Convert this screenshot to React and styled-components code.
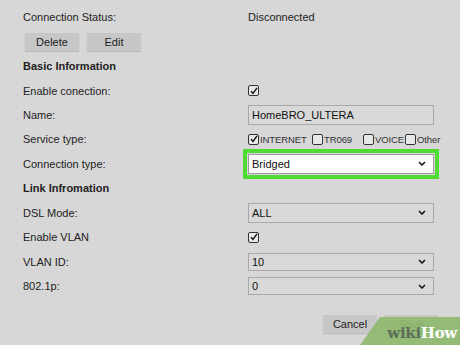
import styled, { createGlobalStyle } from 'styled-components'

const Global = createGlobalStyle`
  html, body {
    margin: 0;
    padding: 0;
    background: #d7d7d7;
    width: 460px;
    height: 345px;
    overflow: hidden;
  }
  body {
    font-family: "Liberation Sans", Arial, sans-serif;
    color: #222;
  }
`

const Page = styled.div`
  position: relative;
  width: 460px;
  height: 345px;
  padding: 5px 0 0 23px;
  box-sizing: border-box;
`

const Form = styled.div`
  display: grid;
  grid-template-columns: 225px 186px;
  grid-auto-rows: 24.45px;
  align-items: center;
  font-size: 11px;
`

const Label = styled.div`
  font-weight: ${p => (p.$bold ? 700 : 400)};
  grid-column: ${p => (p.$wide ? '1 / span 2' : 'auto')};
`

const Value = styled.div`
  display: flex;
  align-items: center;
`

const ButtonRow = styled.div`
  grid-column: 1 / span 2;
  display: flex;
  gap: 8px;
  padding-left: 2px;
`

const Button = styled.div`
  width: 54px;
  height: 18px;
  display: flex;
  align-items: center;
  justify-content: center;
  background: #c7c7c7;
  box-shadow: 0 1px 1px rgba(0, 0, 0, 0.12);
  font-size: 11px;
  color: #222;
`

const Box = styled.span`
  width: 9px;
  height: 9px;
  border: 1px solid #333;
  border-radius: 2px;
  background: #e8e8e8;
  display: inline-flex;
  align-items: center;
  justify-content: center;
  flex: none;
`

const Field = styled.div`
  width: 186px;
  height: ${p => (p.$tall ? 20 : 18)}px;
  box-sizing: border-box;
  border: 1px solid ${p => (p.$white ? '#9a9a9a' : '#a9a9a9')};
  background: ${p => (p.$white ? '#ffffff' : '#d9d9d9')};
  display: flex;
  align-items: center;
  justify-content: space-between;
  padding: 0 7px 0 3px;
  font-size: 11px;
  color: #111;
  outline: ${p => (p.$highlight ? '4px solid #4fdb34' : 'none')};
  outline-offset: 1px;
`

const Services = styled.div`
  display: flex;
  align-items: center;
  font-size: 9.5px;
  letter-spacing: -0.1px;
  color: #333;
`

const Service = styled.span`
  display: inline-flex;
  align-items: center;
  gap: 1px;
  width: ${p => p.$w}px;
  flex: none;
  white-space: nowrap;
`

const Footer = styled.div`
  display: flex;
  justify-content: flex-end;
  gap: 7px;
  width: 415px;
  margin-top: 17px;
`

const Badge = styled.div`
  position: absolute;
  right: 0;
  bottom: 0;
  width: 100px;
  height: 28px;
  background: rgba(142, 186, 110, 0.92);
  clip-path: polygon(20px 0, 100% 0, 100% 100%, 0 100%);
  display: flex;
  align-items: flex-end;
  justify-content: flex-end;
  padding: 0 3px 4px 0;
  box-sizing: border-box;
  font-family: "DejaVu Serif", "Liberation Serif", serif;
  font-weight: 700;
  font-size: 15px;
  line-height: 1;
  letter-spacing: -0.3px;
`

const Wiki = styled.span`
  color: #5d6e58;
`

const How = styled.span`
  color: #ffffff;
`

function Check({ on }) {
  return (
    <Box>
      {on && (
        <svg width="8" height="8" viewBox="0 0 8 8">
          <path d="M1 4.2 L3 6.4 L7 0.8" fill="none" stroke="#111" strokeWidth="1.4" />
        </svg>
      )}
    </Box>
  )
}

function Chevron() {
  return (
    <svg width="8" height="5" viewBox="0 0 8 5">
      <path d="M1 1 L4 4 L7 1" fill="none" stroke="#111" strokeWidth="1.5" />
    </svg>
  )
}

function Select({ value, ...rest }) {
  return (
    <Field {...rest}>
      <span>{value}</span>
      <Chevron />
    </Field>
  )
}

export default function App() {
  return (
    <Page>
      <Global />
      <Form>
        <Label>Connection Status:</Label>
        <Value>Disconnected</Value>

        <ButtonRow>
          <Button>Delete</Button>
          <Button>Edit</Button>
        </ButtonRow>

        <Label $bold $wide>Basic Information</Label>

        <Label>Enable conection:</Label>
        <Value><Check on /></Value>

        <Label>Name:</Label>
        <Value><Field $tall>HomeBRO_ULTERA</Field></Value>

        <Label>Service type:</Label>
        <Services>
          <Service $w={64}><Check on />INTERNET</Service>
          <Service $w={51}><Check />TR069</Service>
          <Service $w={42}><Check />VOICE</Service>
          <Service $w={34}><Check />Other</Service>
        </Services>

        <Label>Connection type:</Label>
        <Value><Select value="Bridged" $white $highlight $tall /></Value>

        <Label $bold $wide>Link Infromation</Label>

        <Label>DSL Mode:</Label>
        <Value><Select value="ALL" $tall /></Value>

        <Label>Enable VLAN</Label>
        <Value><Check on /></Value>

        <Label>VLAN ID:</Label>
        <Value><Select value="10" /></Value>

        <Label>802.1p:</Label>
        <Value><Select value="0" /></Value>
      </Form>

      <Footer>
        <Button>Cancel</Button>
        <Button>Save</Button>
      </Footer>

      <Badge>
        <Wiki>wiki</Wiki>
        <How>How</How>
      </Badge>
    </Page>
  )
}
